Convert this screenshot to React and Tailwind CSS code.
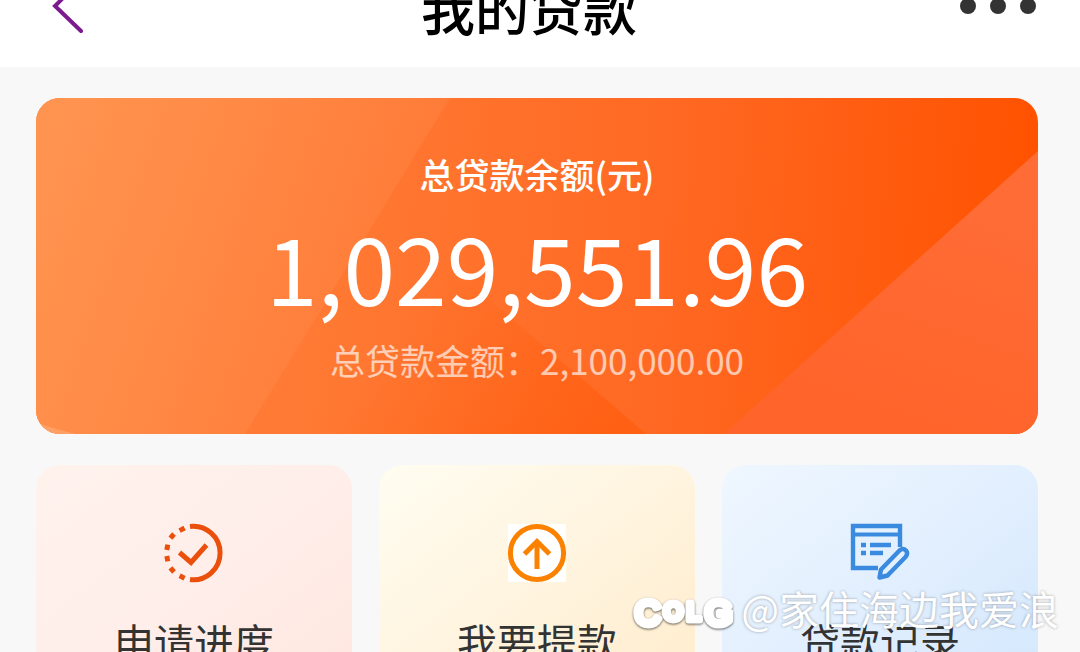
const ProgressIcon = () => (
  <svg width="60" height="60" viewBox="0 0 60 60" fill="none" stroke="#ea500c">
    <path d="M26 3.4A26.8 26.8 0 1 1 26 56.6" strokeWidth="5" />
    <g strokeWidth="5">
      <path d="M15.6 7.6l5-2.6" />
      <path d="M6.4 15.2l3.6-4.2" />
      <path d="M2.8 27l1-5.4" />
      <path d="M2.8 33l1 5.4" />
      <path d="M6.4 44.8l3.6 4.2" />
      <path d="M15.6 52.8l5 2.4" />
    </g>
    <path d="M15.5 29.5L27 39.5L42.5 22" strokeWidth="5" />
  </svg>
);

const WithdrawIcon = () => (
  <svg width="60" height="60" viewBox="0 0 60 60" fill="none" stroke="#fb8200">
    <rect x="1" y="1" width="58" height="58" fill="#fff" stroke="none" />
    <circle cx="30" cy="30" r="26.6" strokeWidth="5" />
    <path d="M30 46V19" strokeWidth="5" />
    <path d="M17.5 31L30 18.5L42.5 31" strokeWidth="5" />
  </svg>
);

const RecordIcon = () => (
  <svg width="60" height="60" viewBox="0 0 60 60" fill="none" stroke="#3a8be0">
    <path d="M28 45H3V3H50V24" strokeWidth="4.4" />
    <path d="M3 11.5H50" strokeWidth="4" />
    <path d="M11 22h5M20 22h21M11 30h5M20 30h13" strokeWidth="4.4" />
    <path
      d="M29.5 54.5L31 46.5L49.5 27.5Q53 24.5 56 27.5Q58.5 30.5 55.5 34L37.5 52.5Z"
      strokeWidth="4.4"
      strokeLinejoin="round"
    />
  </svg>
);

const actions = [
  {
    label: "申请进度",
    icon: <ProgressIcon />,
    bg: "bg-linear-to-br from-[#fff2ed] via-[#ffeeea] to-[#ffe6df]",
  },
  {
    label: "我要提款",
    icon: <WithdrawIcon />,
    bg: "bg-linear-to-br from-[#fffdf1] via-[#fff4df] to-[#ffeccb]",
  },
  {
    label: "贷款记录",
    icon: <RecordIcon />,
    bg: "bg-linear-to-br from-[#eff7ff] via-[#e2effe] to-[#d2e7fd]",
  },
];

const Header = () => (
  <header className="flex h-[67px] items-end overflow-hidden bg-white">
    <div className="flex h-[122px] w-full shrink-0 items-center justify-between pl-9 pr-[42px]">
      <button type="button" aria-label="返回" className="w-16 pl-4">
        <svg width="32" height="56" viewBox="0 0 32 56" fill="none">
          <path
            d="M29 2L3 28L29 53"
            stroke="#7c1b8f"
            strokeWidth="4"
            strokeLinecap="round"
          />
        </svg>
      </button>
      <h1 className="pt-1 text-[54px] font-medium leading-none text-black">
        我的贷款
      </h1>
      <button type="button" aria-label="更多" className="w-20">
        <svg width="80" height="16" viewBox="0 0 80 16" fill="#333">
          <circle cx="10" cy="8" r="8" />
          <circle cx="40" cy="8" r="8" />
          <circle cx="70" cy="8" r="8" />
        </svg>
      </button>
    </div>
  </header>
);

const CardBackground = () => (
  <svg
    className="absolute inset-0 h-full w-full"
    viewBox="0 0 1002 336"
    preserveAspectRatio="none"
    aria-hidden="true"
  >
    <defs>
      <linearGradient id="base" gradientUnits="userSpaceOnUse" x1="280" y1="100" x2="1000" y2="150">
        <stop offset="0" stopColor="#ff7a34" />
        <stop offset="0.5" stopColor="#ff6822" />
        <stop offset="1" stopColor="#ff5200" />
      </linearGradient>
      <linearGradient id="left" gradientUnits="userSpaceOnUse" x1="0" y1="60" x2="350" y2="180">
        <stop offset="0" stopColor="#ff9450" />
        <stop offset="0.5" stopColor="#ff8945" />
        <stop offset="1" stopColor="#ff7c38" />
      </linearGradient>
      <linearGradient id="dark" gradientUnits="userSpaceOnUse" x1="400" y1="190" x2="580" y2="336">
        <stop offset="0" stopColor="#ff5c0c" stopOpacity="0" />
        <stop offset="1" stopColor="#ff5c0c" stopOpacity="0.7" />
      </linearGradient>
      <linearGradient id="right" gradientUnits="userSpaceOnUse" x1="940" y1="100" x2="860" y2="336">
        <stop offset="0" stopColor="#ff6c36" />
        <stop offset="1" stopColor="#ff642a" />
      </linearGradient>
    </defs>
    <rect width="1002" height="336" fill="url(#base)" />
    <path d="M440 190L610 336H200L330 150Z" fill="url(#dark)" />
    <path d="M0 0H414L209 336H0Z" fill="url(#left)" />
    <path d="M1002 53V336H688Z" fill="url(#right)" />
    <path d="M0 324Q14 330 40 336H0Z" fill="#ffa066" />
  </svg>
);

const LoanCard = () => (
  <section className="relative overflow-hidden rounded-3xl pb-[54px] pt-14 text-center text-white">
    <CardBackground />
    <div className="relative">
      <h2 className="text-[35px] font-medium leading-10">总贷款余额(元)</h2>
      <p className="mt-6 text-[93px] leading-[96px]">1,029,551.96</p>
      <p className="mt-[26px] text-[35px] leading-10 text-white/65">
        总贷款金额：2,100,000.00
      </p>
    </div>
  </section>
);

const Watermark = () => (
  <div className="absolute bottom-4 right-[21px] flex items-center gap-2 text-white">
    <svg
      width="108"
      height="48"
      viewBox="0 0 108 48"
      className="overflow-visible drop-shadow-[0_1px_1px_rgba(0,0,0,0.6)]"
      fill="#fff"
      stroke="#fff"
      strokeWidth="7"
      strokeLinejoin="round"
      fontFamily="Liberation Sans"
    >
      <text x="10" y="41" fontSize="35">
        C
      </text>
      <text x="39" y="36" fontSize="24">
        O
      </text>
      <text x="62" y="36" fontSize="24">
        L
      </text>
      <text x="80" y="41" fontSize="35">
        G
      </text>
    </svg>
    <span className="text-[40px] leading-[56px] [text-shadow:0_0_3px_rgba(0,0,0,0.35)]">
      @家住海边我爱浪
    </span>
  </div>
);

export default function App() {
  return (
    <div className="relative h-screen overflow-hidden bg-[#f8f8f8] font-['Noto_Sans_CJK_SC',sans-serif]">
      <Header />
      <main className="pl-9 pr-[42px] pt-[31px]">
        <LoanCard />
        <nav className="mt-[31px] grid grid-cols-3 gap-[27px]">
          {actions.map((item) => (
            <button
              type="button"
              key={item.label}
              className={`flex flex-col items-center rounded-3xl pb-10 pt-[58px] ${item.bg}`}
            >
              {item.icon}
              <span className="mt-8 text-[40px] leading-[52px] text-[#333]">
                {item.label}
              </span>
            </button>
          ))}
        </nav>
      </main>
      <Watermark />
    </div>
  );
}
